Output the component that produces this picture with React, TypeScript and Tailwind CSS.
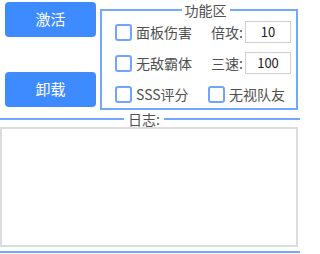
import React from 'react'

const font = { fontFamily: '"Noto Sans CJK SC", "Noto Sans", sans-serif' }

const Check: React.FC<{ label: string }> = ({ label }) => (
  <label className="flex items-center gap-[4px] text-[14px] leading-none text-[#505050]">
    <span className="w-[17px] h-[17px] rounded-[3px] border-2 border-[#6fa5ff] bg-white shrink-0" />
    <span>{label}</span>
  </label>
)

const Field: React.FC<{ label: string; value: string }> = ({ label, value }) => (
  <div className="flex items-center h-[22px]">
    <span className="w-[37px] pl-[3px] text-[14px] leading-none text-[#505050]">{label}</span>
    <div className="w-[46px] h-[22px] border border-[#cfcfcf] flex items-center justify-center text-[13px] text-[#222]">
      {value}
    </div>
  </div>
)

export default function App() {
  return (
    <div className="w-[300px] h-[254px] bg-white overflow-hidden flex flex-col" style={font}>
      {/* top area */}
      <div className="flex h-[110px]">
        <div className="w-[100px] pl-[5px] pt-[2px] pb-[3px] flex flex-col justify-between">
          <button className="w-[91px] h-[35px] rounded-[4px] bg-[#3d8bff] text-white text-[15px]">激活</button>
          <button className="w-[91px] h-[35px] rounded-[4px] bg-[#3d8bff] text-white text-[15px]">卸载</button>
        </div>
        <fieldset className="mt-[2px] w-[198px] h-[108px] border-2 border-[#72a8ff] pl-[13px] pt-[3px]">
          <legend className="mx-auto px-[3px] text-[14px] leading-[16px] text-[#505050]">功能区</legend>
          <div className="grid grid-cols-[93px_auto] grid-rows-[22px_22px_22px] gap-y-[9px] items-center">
            <Check label="面板伤害" />
            <Field label="倍攻:" value="10" />
            <Check label="无敌霸体" />
            <Field label="三速:" value="100" />
            <Check label="SSS评分" />
            <Check label="无视队友" />
          </div>
        </fieldset>
      </div>

      {/* log */}
      <div className="flex items-center h-[17px]">
        <div className="w-[124px] h-[2px] bg-[#72a8ff]" />
        <span className="px-[4px] text-[14px] leading-none text-[#505050]">日志:</span>
        <div className="flex-1 h-[2px] bg-[#72a8ff]" />
      </div>
      <div className="w-[298px] h-[120px] border-2 border-[#dcdce0] bg-white" />
      <div className="mt-[4px] h-[2px] bg-[#72a8ff]" />
    </div>
  )
}
